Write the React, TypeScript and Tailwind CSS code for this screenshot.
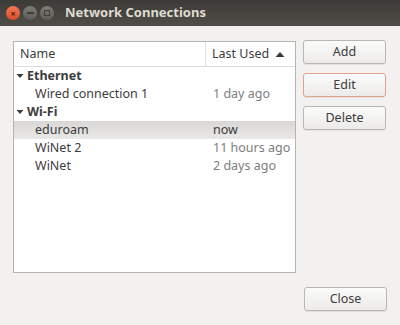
import React from "react";

const font = { fontFamily: '"Noto Sans", "DejaVu Sans", sans-serif' };

function Btn({ label, focus }: { label: string; focus?: boolean }) {
  return (
    <div
      className={`flex h-[24px] w-[83px] items-center justify-center rounded-[3px] border bg-gradient-to-b from-[#fbfbfa] to-[#ecebea] text-[12.5px] text-[#3c3c3c] shadow-[0_1px_0_rgba(0,0,0,0.06)] ${
        focus ? "border-[#e3a28c]" : "border-[#b8b6b3]"
      }`}
    >
      {label}
    </div>
  );
}

function Group({ label }: { label: string }) {
  return (
    <div className="flex h-[18px] items-center pl-[2px] text-[12.5px] font-bold text-[#3c3c3c]">
      <svg width="8" height="8" viewBox="0 0 8 8" className="mr-[3px]">
        <path d="M0.5 2 L7.5 2 L4 6 Z" fill="#3c3c3c" />
      </svg>
      {label}
    </div>
  );
}

function Row({ name, when, selected, dark }: { name: string; when: string; selected?: boolean; dark?: boolean }) {
  return (
    <div
      className={`flex h-[18px] items-center text-[12.5px] ${
        selected ? "bg-gradient-to-b from-[#d9d8d6] to-[#e9e8e7]" : ""
      }`}
    >
      <div className="w-[192px] pl-[21px] text-[#3c3c3c]">{name}</div>
      <div className={`pl-[7px] ${dark ? "text-[#3c3c3c]" : "text-[#7d7d7d]"}`}>{when}</div>
    </div>
  );
}

export default function App() {
  return (
    <div className="flex h-[325px] w-[400px] flex-col bg-[#f2f1f0]" style={font}>
      <div className="flex h-[26px] items-center bg-gradient-to-b from-[#3c3b37] to-[#4e4d48] pl-[6px]">
        <div className="flex h-[14px] w-[14px] items-center justify-center rounded-full bg-gradient-to-b from-[#f37a53] to-[#d9492a] text-[9px] font-bold leading-none text-[#4a1b0c]">
          ×
        </div>
        <div className="ml-[3px] flex h-[14px] w-[14px] items-center justify-center rounded-full bg-gradient-to-b from-[#7c7b76] to-[#5e5d58]">
          <div className="h-[2px] w-[7px] bg-[#3f3e3a]" />
        </div>
        <div className="ml-[3px] flex h-[14px] w-[14px] items-center justify-center rounded-full bg-gradient-to-b from-[#7c7b76] to-[#5e5d58]">
          <div className="h-[6px] w-[6px] border border-[#3f3e3a]" />
        </div>
        <div className="ml-[11px] text-[13px] font-bold text-[#dfdbd2]">Network Connections</div>
      </div>
      <div className="flex flex-1 px-[13px] pt-[14px]">
        <div className="mt-[1px] flex h-[232px] w-[283px] flex-col border border-[#b6b4b1] bg-white">
          <div className="flex h-[25px] border-b border-[#dddcda] text-[12.5px] text-[#3c3c3c]">
            <div className="flex w-[192px] items-center border-r border-[#e4e3e1] pl-[6px]">Name</div>
            <div className="flex flex-1 items-center pl-[6px]">
              Last Used
              <svg width="10" height="7" viewBox="0 0 10 7" className="ml-[6px]">
                <path d="M0.5 6 L9.5 6 L5 1 Z" fill="#3c3c3c" />
              </svg>
            </div>
          </div>
          <Group label="Ethernet" />
          <Row name="Wired connection 1" when="1 day ago" />
          <Group label="Wi-Fi" />
          <Row name="eduroam" when="now" selected dark />
          <Row name="WiNet 2" when="11 hours ago" />
          <Row name="WiNet" when="2 days ago" />
        </div>
        <div className="ml-[7px] flex flex-col gap-[9px]">
          <Btn label="Add" />
          <Btn label="Edit" focus />
          <Btn label="Delete" />
        </div>
      </div>
      <div className="flex justify-end pb-[14px] pr-[13px]">
        <Btn label="Close" />
      </div>
    </div>
  );
}
